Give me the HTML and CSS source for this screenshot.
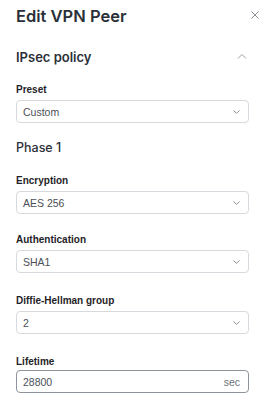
FILE: index.html
```html
<html>
<head>
    <meta charset="utf-8">
    <link rel="stylesheet" href="styles.css">
</head>
<body>
    <div class="panel">
        <div class="header">
            <h1>Edit VPN Peer</h1>
            <button class="close" aria-label="Close">
                <svg width="8" height="8" viewBox="0 0 8 8"><path d="M0.5 0.5L7.5 7.5M7.5 0.5L0.5 7.5" stroke="#8a9097" stroke-width="1"/></svg>
            </button>
        </div>

        <div class="section">
            <h2>IPsec policy</h2>
            <svg class="toggle" width="10" height="6" viewBox="0 0 10 6"><path d="M1 5.5L5 1.5L9 5.5" fill="none" stroke="#9aa0a6" stroke-width="1"/></svg>
        </div>

        <div class="field">
            <label>Preset</label>
            <div class="select">
                <span>Custom</span>
                <svg class="caret" width="7" height="4" viewBox="0 0 7 4"><path d="M0.5 0.5L3.5 3.3L6.5 0.5" fill="none" stroke="#8a9097" stroke-width="1"/></svg>
            </div>
        </div>

        <h3>Phase 1</h3>

        <div class="field">
            <label>Encryption</label>
            <div class="select">
                <span>AES 256</span>
                <svg class="caret" width="7" height="4" viewBox="0 0 7 4"><path d="M0.5 0.5L3.5 3.3L6.5 0.5" fill="none" stroke="#8a9097" stroke-width="1"/></svg>
            </div>
        </div>

        <div class="field">
            <label>Authentication</label>
            <div class="select">
                <span>SHA1</span>
                <svg class="caret" width="7" height="4" viewBox="0 0 7 4"><path d="M0.5 0.5L3.5 3.3L6.5 0.5" fill="none" stroke="#8a9097" stroke-width="1"/></svg>
            </div>
        </div>

        <div class="field wide">
            <label>Diffie-Hellman group</label>
            <div class="select">
                <span>2</span>
                <svg class="caret" width="7" height="4" viewBox="0 0 7 4"><path d="M0.5 0.5L3.5 3.3L6.5 0.5" fill="none" stroke="#8a9097" stroke-width="1"/></svg>
            </div>
        </div>

        <div class="field wide last">
            <label>Lifetime</label>
            <div class="select input">
                <span>28800</span>
                <span class="unit">sec</span>
            </div>
        </div>
    </div>
</body>
</html>
```
FILE: styles.css
```css
body{
    margin: 0;
    background: #fff;
    font-family: "Liberation Sans", sans-serif;
    color: #22272e;
}

.panel{
    padding: 0 10px 0 16px;
}

.header{
    display: flex;
    align-items: center;
    justify-content: space-between;
    height: 28px;
    padding-top: 2px;
}

h1, h2, h3{
    font-family: "Inter", "Liberation Sans", sans-serif;
    color: #2b3038;
}

h1{
    margin: 0;
    font-size: 16.5px;
    font-weight: 600;
}

.close{
    border: none;
    background: transparent;
    padding: 0;
    margin-right: -10px;
    margin-top: -3px;
    display: flex;
}

.section{
    display: flex;
    align-items: center;
    justify-content: space-between;
    margin-top: 13px;
    height: 28px;
}

h2{
    margin: 0;
    font-size: 13px;
    font-weight: 600;
}

.toggle{
    margin-right: 2px;
    margin-top: -2px;
}

.field{
    display: flex;
    flex-direction: column;
    margin-top: 20px;
}

.section + .field{
    margin-top: 13px;
}

.field label{
    font-size: 10px;
    font-weight: 700;
    color: #1f2328;
    margin-bottom: 5px;
}

.wide{
    margin-top: 22px;
}

.last label{
    margin-bottom: 3px;
}

h3{
    margin: 17px 0 19px;
    font-size: 12.5px;
    font-weight: 500;
}

.select{
    display: flex;
    align-items: center;
    justify-content: space-between;
    height: 21px;
    border: 1px solid #d6dade;
    border-radius: 4px;
    padding: 0 8px 0 6px;
    font-size: 10.5px;
    color: #4b5058;
}

.input{
    border-color: #8e949b;
}

.unit{
    color: #6b7078;
}
```
